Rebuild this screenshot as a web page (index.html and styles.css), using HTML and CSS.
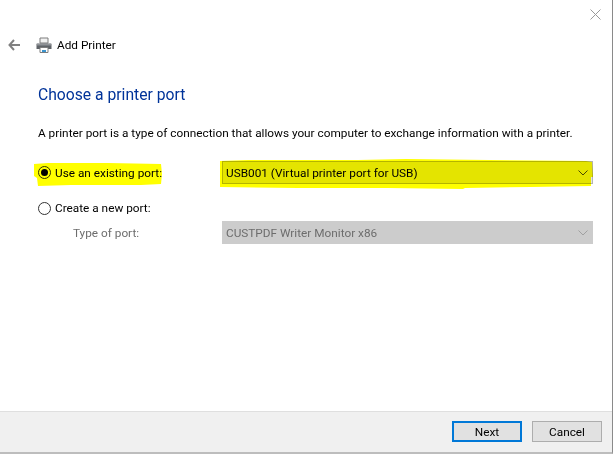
FILE: index.html
```html
<!DOCTYPE html>
<html lang="en">
<head>
<meta charset="utf-8">
<title>Add Printer</title>
<link rel="stylesheet" href="styles.css">
</head>
<body>
<div class="window">
  <div class="titlebar">
    <svg class="close" width="11" height="11" viewBox="0 0 11 11"><path d="M.5.5l10 10M10.5.5l-10 10" stroke="#9a9a9a" fill="none"/></svg>
  </div>
  <div class="nav">
    <svg class="back" width="12" height="12" viewBox="0 0 12 12"><path d="M6 1L1.500 6 6 11M2 6h10" stroke="#808080" stroke-width="2" fill="none"/></svg>
    <svg class="printer" width="16" height="16" viewBox="0 0 16 16">
      <path d="M4 1h8v5H4z" fill="#f2f2f2" stroke="#7c7c7c"/>
      <path d="M1 6.5h14a.5.5 0 0 1 .5.5v5h-15V7a.5.5 0 0 1 .5-.5z" fill="#5f6368"/>
      <path d="M1 7h14v1.500H1z" fill="#8f9296"/>
      <path d="M4 10.500h8v5H4z" fill="#fff" stroke="#7c7c7c"/>
      <path d="M6 13h4v2H6z" fill="#3a94cf"/>
    </svg>
    <span class="nav-title">Add Printer</span>
  </div>
  <main class="content">
    <h1 class="heading">Choose a printer port</h1>
    <p class="intro">A printer port is a type of connection that allows your computer to exchange information with a printer.</p>
    <div class="row row-existing">
      <label class="choice">
        <span class="radio radio-on"></span>
        <span>Use an existing port:</span>
      </label>
      <div class="select select-active">
        <span>USB001 (Virtual printer port for USB)</span>
        <svg class="chev" width="10" height="6" viewBox="0 0 10 6"><path d="M.5.5L5 5 9.500.5" stroke="#4a4a00" fill="none"/></svg>
      </div>
    </div>
    <div class="row row-new">
      <label class="choice">
        <span class="radio"></span>
        <span>Create a new port:</span>
      </label>
    </div>
    <div class="row row-type">
      <span class="type-label">Type of port:</span>
      <div class="select select-disabled">
        <span>CUSTPDF Writer Monitor x86</span>
        <svg class="chev" width="10" height="6" viewBox="0 0 10 6"><path d="M.5.5L5 5 9.500.5" stroke="#a0a0a0" fill="none"/></svg>
      </div>
    </div>
  </main>
  <footer class="footer">
    <button class="btn btn-primary">Next</button>
    <button class="btn">Cancel</button>
  </footer>
  <svg class="marker" width="613" height="454" viewBox="0 0 613 454">
    <path d="M34 164L48 163H108L161 164L162 174L161 184L141 185H71L38 186L37 178L34 176Z" fill="#ffff00"/>
    <path d="M220 161L248 160H358L406 159L586 161L592 162L593 177H591V186L531 187L465 188L463 189L388 188H298L220 187Z" fill="#ffff00"/>
  </svg>
</div>
</body>
</html>
```
FILE: styles.css
```css
* { box-sizing: border-box; }
html, body { margin: 0; padding: 0; }
body { width: 613px; height: 454px; overflow: hidden; background: #fff; font-family: Roboto, "Noto Sans", sans-serif; font-size: 11.800px; color: #000; }
.window { position: relative; width: 613px; height: 454px; display: flex; flex-direction: column; border-right: 1px solid #8a8a8a; border-bottom: 2px solid #bdbdbd; background: #fff; }
.titlebar { height: 33px; display: flex; justify-content: flex-end; padding: 9px 11px 0 0; flex: none; }
.close { display: block; }
.nav { display: flex; align-items: center; height: 23px; padding-left: 8px; flex: none; }
.back { margin-right: 16px; }
.printer { margin-right: 5px; }
.content { flex: 1; padding: 29px 19px 0 38px; min-height: 0; }
.heading { margin: 0; font-size: 15.700px; font-weight: 400; line-height: 20px; color: #003399; }
.intro { margin: 20px 0 0; line-height: 16px; white-space: nowrap; }
.row { display: flex; align-items: center; }
.row-existing { margin-top: 20px; height: 23px; }
.row-new { margin-top: 14px; height: 20px; }
.row-type { margin-top: 3px; height: 23px; }
.choice { display: flex; align-items: center; gap: 4px; width: 184px; }
.radio { width: 13px; height: 13px; border: 1px solid #333; border-radius: 50%; background: #fff; display: flex; align-items: center; justify-content: center; flex: none; }
.radio-on::before { content: ""; width: 7px; height: 7px; border-radius: 50%; background: #000; }
.type-label { width: 184px; padding-left: 35px; color: #6d6d6d; }
.select { width: 371px; height: 23px; display: flex; align-items: center; justify-content: space-between; padding: 0 4px 0 3px; border: 1px solid; }
.select-active { border-color: #b4b4b4; background: #e4e4e4; }
.select-disabled { border-color: #cccccc; background: #cccccc; color: #6d6d6d; }
.footer { height: 41px; flex: none; display: flex; justify-content: flex-end; align-items: flex-start; gap: 10px; padding: 9px 10px 0 0; background: #f0f0f0; border-top: 1px solid #dfdfdf; }
.btn { width: 70px; height: 21px; padding: 0; border: 1px solid #adadad; background: #e1e1e1; font: inherit; color: #000; }
.btn-primary { border: 2px solid #0078d7; }
.marker { position: absolute; left: 0; top: 0; mix-blend-mode: multiply; pointer-events: none; }
```
